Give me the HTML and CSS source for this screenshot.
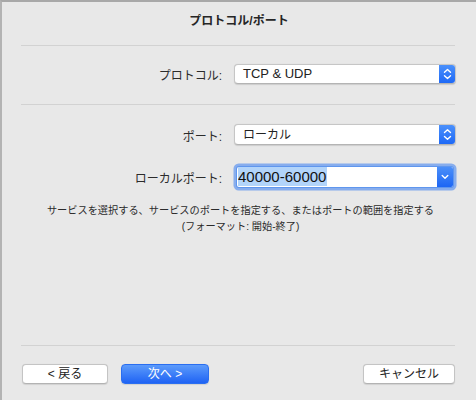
FILE: index.html
```html
<!DOCTYPE html>
<html lang="ja">
<head>
<meta charset="utf-8">
<title>プロトコル/ポート</title>
<link rel="stylesheet" href="styles.css">
</head>
<body>
<div class="window">
  <div class="title">プロトコル/ポート</div>
  <div class="sep sep-top"></div>

  <div class="row row-protocol">
    <div class="label">プロトコル:</div>
    <div class="popup">
      <span class="popup-text">TCP &amp; UDP</span>
      <span class="stepper">
        <svg width="17" height="20" viewBox="0 0 17 20"><polyline points="5.5,8.2 8.5,5.4 11.5,8.2" fill="none" stroke="#fff" stroke-width="1.4" stroke-linecap="round" stroke-linejoin="round"/><polyline points="5.5,11.8 8.5,14.6 11.5,11.8" fill="none" stroke="#fff" stroke-width="1.4" stroke-linecap="round" stroke-linejoin="round"/></svg>
      </span>
    </div>
  </div>

  <div class="sep sep-mid"></div>

  <div class="row row-port">
    <div class="label">ポート:</div>
    <div class="popup popup-tall">
      <span class="popup-text cjk">ローカル</span>
      <span class="stepper">
        <svg width="17" height="21" viewBox="0 0 17 21"><polyline points="5.5,8.6 8.5,5.8 11.5,8.6" fill="none" stroke="#fff" stroke-width="1.4" stroke-linecap="round" stroke-linejoin="round"/><polyline points="5.5,12.4 8.5,15.2 11.5,12.4" fill="none" stroke="#fff" stroke-width="1.4" stroke-linecap="round" stroke-linejoin="round"/></svg>
      </span>
    </div>
  </div>

  <div class="row row-local">
    <div class="label">ローカルポート:</div>
    <div class="combo-cell">
      <div class="combo">
        <span class="combo-text"><span class="selected">40000-60000</span></span>
        <span class="combo-btn">
          <svg width="16" height="20" viewBox="0 0 16 20"><polyline points="5.2,8.6 8,11.2 10.8,8.6" fill="none" stroke="#fff" stroke-width="1.4" stroke-linecap="round" stroke-linejoin="round"/></svg>
        </span>
      </div>
    </div>
  </div>

  <p class="desc">サービスを選択する、サービスのポートを指定する、またはポートの範囲を指定する<br>(フォーマット: 開始-終了)</p>

  <div class="footer">
    <div class="sep"></div>
    <div class="buttons">
      <button class="btn btn-back">&lt; 戻る</button>
      <button class="btn btn-primary">次へ &gt;</button>
      <span class="spacer"></span>
      <button class="btn btn-cancel">キャンセル</button>
    </div>
  </div>
</div>
</body>
</html>
```

FILE: styles.css
```css
html, body {
  margin: 0;
  padding: 0;
}
body {
  width: 476px;
  height: 400px;
  overflow: hidden;
  font-family: "Liberation Sans", "Noto Sans CJK JP", sans-serif;
  color: #262626;
}
.window {
  box-sizing: border-box;
  width: 476px;
  height: 400px;
  background: #e8e8e8;
  border-top: 2px solid #a8a8a8;
  border-left: 2px solid #b3b3b3;
  padding: 0 20px 0 19px;
  display: flex;
  flex-direction: column;
}
.title {
  margin-top: 11px;
  height: 16px;
  line-height: 16px;
  font-size: 12px;
  font-weight: bold;
  text-align: center;
  padding-left: 1px;
}
.sep {
  height: 1px;
  background: #d2d2d2;
  margin-right: 1px;
}
.sep-top {
  margin-top: 16px;
}
.sep-mid {
  margin-top: 20px;
}
.row {
  display: grid;
  grid-template-columns: 201px 222px;
  column-gap: 12px;
  align-items: center;
}
.row-protocol {
  margin-top: 18px;
}
.row-port {
  margin-top: 19px;
}
.row-local {
  margin-top: 21px;
}
.label {
  text-align: right;
  font-size: 12px;
  line-height: 16px;
  color: #2b2b2b;
  padding-top: 3px;
}
.row-port .label {
  padding-top: 4px;
}
.row-local .label {
  padding-top: 5px;
}
.popup {
  box-sizing: border-box;
  height: 20px;
  background: #fff;
  border: 1px solid #c6c6c6;
  border-bottom-color: #b4b4b4;
  border-radius: 4px;
  box-shadow: 0 0.5px 1px rgba(0, 0, 0, 0.12);
  display: flex;
  align-items: stretch;
  overflow: hidden;
}
.popup-tall {
  height: 21px;
}
.popup-text {
  flex: 1;
  padding-left: 8px;
  font-size: 13px;
  line-height: 18px;
  color: #222;
}
.popup-tall .popup-text {
  line-height: 19px;
}
.popup-text.cjk {
  font-size: 12px;
  padding-top: 1px;
  line-height: 18px;
}
.stepper {
  width: 17px;
  margin: -1px -1px -1px 0;
  background: linear-gradient(#4d92fb, #1c67f6);
  border-radius: 0 4px 4px 0;
  display: flex;
  align-items: center;
  justify-content: center;
}
.stepper svg {
  display: block;
}
.combo-cell {
  padding: 0 3px;
}
.combo {
  box-sizing: border-box;
  height: 20px;
  background: #fff;
  display: flex;
  align-items: stretch;
  border-radius: 2px;
  box-shadow: 0 0 0 1px #5f96ee, 0 0 0 3.5px rgba(110, 157, 238, 0.8);
}
.combo-text {
  flex: 1;
  padding-left: 1px;
  font-size: 15px;
  line-height: 20px;
  color: #111;
}
.selected {
  background: #b2d4fa;
  padding: 1px 1px 1px 0;
}
.combo-btn {
  width: 16px;
  background: linear-gradient(#4b8ff9, #1d66f4);
  border-radius: 0 2px 2px 0;
  display: flex;
  align-items: center;
  justify-content: center;
}
.desc {
  margin: 16px 0 0 0;
  font-size: 10.2px;
  line-height: 16px;
  text-align: center;
  color: #2b2b2b;
  padding-left: 4px;
}
.footer {
  margin-top: auto;
  padding-bottom: 16px;
}
.buttons {
  margin-top: 18px;
  display: flex;
  align-items: center;
  padding-left: 1px;
}
.btn {
  box-sizing: border-box;
  height: 20px;
  padding: 0;
  font-family: "Liberation Sans", "Noto Sans CJK JP", sans-serif;
  font-size: 12px;
  line-height: 18px;
  color: #222;
  background: #fff;
  border: 1px solid #c4c4c4;
  border-bottom-color: #b3b3b3;
  border-radius: 4px;
  box-shadow: 0 0.5px 1px rgba(0, 0, 0, 0.1);
}
.btn-back {
  width: 86px;
}
.btn-primary {
  width: 88px;
  margin-left: 13px;
  color: #fff;
  border: 1px solid #2a6ef0;
  background: linear-gradient(#5c9bfb, #1f63f4);
}
.spacer {
  flex: 1;
}
.btn-cancel {
  width: 92px;
  margin-right: 1px;
}
```
